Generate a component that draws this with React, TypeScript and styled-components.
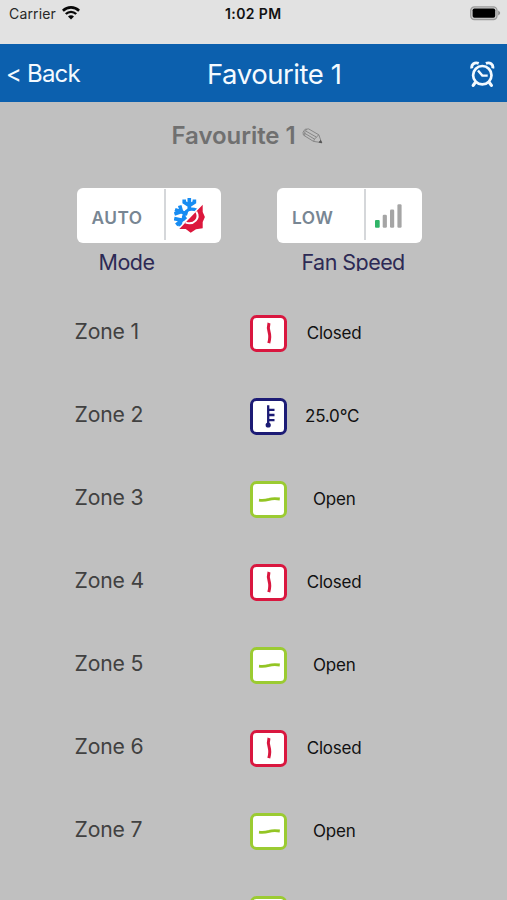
import React from "react";
import styled, { createGlobalStyle } from "styled-components";

const GlobalStyle = createGlobalStyle`
  * { box-sizing: border-box; }
  html, body { margin: 0; padding: 0; overflow: hidden; background: #c0c0c0; }
  body { font-family: Inter, "Liberation Sans", sans-serif; }
  svg { display: block; flex: none; }
`;

const Screen = styled.div`
  width: 507px;
  height: 900px;
  overflow: hidden;
  background: #c0c0c0;
  display: flex;
  flex-direction: column;
`;

const Text = styled.span<{ $w: number; $size: number; $space?: number; $weight?: number; $color?: string }>`
  width: ${(p) => p.$w}px;
  font-size: ${(p) => p.$size}px;
  letter-spacing: ${(p) => p.$space ?? 0}px;
  font-weight: ${(p) => p.$weight ?? 400};
  color: ${(p) => p.$color ?? "#111"};
  white-space: nowrap;
  line-height: 1.2;
`;

const StatusBar = styled.div`
  height: 43.5px;
  flex: none;
  background: #e2e2e2;
  display: grid;
  grid-template-columns: 53px 163px 244.5px 30px;
  align-items: start;
  padding: 6px 0 0 9px;
`;

const NavBar = styled.header`
  height: 58.5px;
  flex: none;
  background: #0c60ae;
  display: grid;
  grid-template-columns: 201px 263px 28px;
  align-items: center;
  padding: 3px 0 0 6px;
`;

const TitleRow = styled.div`
  height: 86px;
  flex: none;
  display: flex;
  align-items: flex-start;
  padding: 20px 0 0 171.5px;
  svg { margin: 6px 0 0 5px; }
`;

const Controls = styled.div`
  display: flex;
  flex: none;
  height: 104.5px;
  gap: 56px;
  padding-left: 76.5px;
`;

const Control = styled.div`
  width: 144.5px;
`;

const ControlButton = styled.button`
  width: 144.5px;
  height: 55px;
  border: 0;
  border-radius: 6px;
  background: #fff;
  display: grid;
  grid-template-columns: 87px 2px 1fr;
  align-items: center;
  padding: 1px 0 3px;
  font-family: inherit;
  text-align: left;
  > span { padding: 7px 0 0 15px; }
`;

const Divider = styled.div`
  height: 51px;
  background: #d5d7da;
`;

const Caption = styled.div<{ $inset: number }>`
  height: 28px;
  overflow: hidden;
  padding: 7px 0 0 ${(p) => p.$inset}px;
  span { display: block; }
`;

const ZoneList = styled.div`
  flex: none;
  margin-top: -1px;
`;

const ZoneRow = styled.div`
  height: 83px;
  display: grid;
  grid-template-columns: 175.5px 37px 93px;
  align-items: center;
  padding-left: 74.5px;
`;

const ZoneName = styled.div`
  padding-bottom: 2px;
`;

const ZoneState = styled.div<{ $left: number }>`
  padding-left: ${(p) => p.$left}px;
`;

type State = "closed" | "temp" | "open";
const tones: Record<State, string> = { closed: "#d9173f", temp: "#1c1b75", open: "#9bcb32" };

const StateBox = styled.div<{ $state: State }>`
  width: 37px;
  height: 37px;
  border: 3px solid ${(p) => tones[p.$state]};
  border-radius: 6.5px;
  background: #fff;
`;

const StateGlyph = ({ state }: { state: State }) => (
  <StateBox $state={state}>
    <svg width="31" height="31" viewBox="0 0 31 31" fill="none" stroke={tones[state]}>
      {state === "closed" && (
        <path d="M16 5C15 8.5 15 11 16.2 14.5C17.3 18 16.8 21.5 15.8 25.2" strokeWidth="3" />
      )}
      {state === "open" && (
        <path d="M6 16.1C10 16.6 12.5 16.3 16 15.4C19.5 14.3 23 14.5 26.8 15" strokeWidth="2.8" stroke="#93c524" />
      )}
      {state === "temp" && (
        <>
          <path d="M15.2 4.2V24M16 8.9H21.5M16 14H21.5M16 19.2H21.5" strokeWidth="2.3" />
          <circle cx="15.2" cy="24" r="2.6" fill={tones.temp} stroke="none" />
        </>
      )}
    </svg>
  </StateBox>
);

const Wifi = () => (
  <svg width="18" height="14" viewBox="0 0 18 14" fill="none" stroke="#080808" strokeWidth="2.6">
    <path d="M.9 4.7C5.6.3 12.4.3 17.1 4.7" />
    <path d="M3.8 8C6.8 5.1 11.2 5.1 14.2 8" strokeWidth="2.4" />
    <path d="M6 10.4C7.8 8.7 10.2 8.7 12 10.4L9 13.6Z" fill="#080808" stroke="none" />
  </svg>
);

const Battery = () => (
  <svg width="31" height="15" viewBox="0 0 31 15">
    <rect x=".7" y=".9" width="26.3" height="12.6" rx="3.7" fill="#d0d0d0" stroke="#9a9a9a" strokeWidth="1.3" />
    <rect x="2.6" y="2.4" width="22.6" height="9.4" rx="1.8" fill="#000" />
    <path d="M28.2 4.6Q32.2 7.1 28.2 9.6Z" fill="#8e8e8e" />
  </svg>
);

const Alarm = () => (
  <svg width="25" height="27" viewBox="0 0 25 27" fill="none" stroke="#f4faff">
    <circle cx="12.3" cy="14.2" r="9.2" strokeWidth="2.7" />
    <path d="M1.9 7.4C.8 3.2 5 .8 8.7 2.4M22.7 7.4C23.8 3.2 19.6.8 15.9 2.4" strokeWidth="2.9" />
    <path d="M5.2 21.6L3.2 24.4M19.4 21.6L21.4 24.4" strokeWidth="3.2" strokeLinecap="round" />
    <path d="M8 9.4L12.3 14.5L17.7 14.6" strokeWidth="2.4" />
  </svg>
);

const Pencil = () => (
  <svg width="21" height="17" viewBox="0 0 21 17" fill="none" stroke="#808080" strokeWidth=".9" strokeLinejoin="round">
    <path d="M3 1.3L6.6.9L16.8 6.8L19.6 14.6L11.5 13.4L1.4 7.1Q-.1 4.2 3 1.3Z" />
    <path d="M2.5 5.2L12.5 11.1L11.5 13.4M4 3.2L14.4 9.1L12.5 11.1M16.8 6.8L14.4 9.1M4.7 1.2Q2 3 2.7 7.8" />
    <path d="M18.5 12.4L19.8 14.8L17.2 14.3Z" fill="#555" stroke="#555" />
  </svg>
);

const AutoMode = () => (
  <svg width="33" height="37" viewBox="0 0 33 37">
    <defs>
      <clipPath id="cold-half">
        <path d="M-2 -2H36L27.3 7.2L3.5 31.8L-2 37Z" />
      </clipPath>
    </defs>
    <g clipPath="url(#cold-half)" fill="none" stroke="#178cf2" strokeWidth="3.6">
      <path d="M15.3 1V13M10.2 2.6V5.2L15.3 8.5L20.4 5.2V2.6" />
      <path d="M1 12.6L13.5 17M5.7 8.4L7.5 14.6L.4 17" />
      <path d="M2.2 27.8L12 19.8M.2 21.6L7 23L6 29.6" />
      <path d="M9.6 23.5Q8.6 15.5 15.3 12.4Q19 11.6 22.8 13.2" strokeWidth="3.2" />
    </g>
    <path d="M28.7 7.8V15L30.9 20L28.7 25V31.2L22 32.3L16.7 35.8L11.7 32H5.3L28.7 7.8Z" fill="#dc173c" />
    <path d="M22.2 14.4C26.3 21.3 20.2 28.4 11.6 25.6" fill="none" stroke="#fff" strokeWidth="2" />
  </svg>
);

const FanBars = () => (
  <svg width="27" height="25" viewBox="0 0 27 25">
    <rect x="0" y="16" width="4.7" height="7.8" rx="1" fill="#30b568" />
    <g fill="#a5a5a5">
      <rect x="7.7" y="10.7" width="4.2" height="13" rx="1.3" />
      <rect x="15" y="5.5" width="4.2" height="18.2" rx="1.3" />
      <rect x="22.4" y=".3" width="4.2" height="23.4" rx="1.3" />
    </g>
  </svg>
);

const ModeIcon = styled.div`
  padding: 1px 0 0 8px;
`;
const FanIcon = styled.div`
  padding: 3px 0 0 8.7px;
`;

const zones: State[] = ["closed", "temp", "open", "closed", "open", "closed", "open", "open"];
const stateText: Record<State, { label: string; left: number; space: number }> = {
  closed: { label: "Closed", left: 19.7, space: -0.2 },
  temp: { label: "25.0°C", left: 18, space: -0.2 },
  open: { label: "Open", left: 26, space: -0.2 },
};

export default function App() {
  return (
    <>
      <GlobalStyle />
      <Screen>
        <StatusBar>
          <Text $w={50} $size={14} $space={0.15} $color="#282828">Carrier</Text>
          <Wifi />
          <Text $w={70} $size={14} $weight={600} $space={0.4}>1:02 PM</Text>
          <Battery />
        </StatusBar>
        <NavBar>
          <Text $w={100} $size={24} $space={-0.8} $color="#f4faff">&lt; Back</Text>
          <Text $w={180} $size={27.5} $space={-0.45} $color="#f4faff">Favourite 1</Text>
          <Alarm />
        </NavBar>
        <TitleRow>
          <Text $w={125} $size={24} $space={-0.05} $weight={600} $color="#707070">Favourite 1</Text>
          <Pencil />
        </TitleRow>
        <Controls>
          <Control>
            <ControlButton>
              <Text $w={87} $size={17.3} $weight={600} $space={0.5} $color="#788693">AUTO</Text>
              <Divider />
              <ModeIcon><AutoMode /></ModeIcon>
            </ControlButton>
            <Caption $inset={22}><Text $w={100} $size={21.5} $space={-0.5} $color="#2d2a55">Mode</Text></Caption>
          </Control>
          <Control>
            <ControlButton>
              <Text $w={87} $size={17.3} $weight={600} $space={0.5} $color="#788693">LOW</Text>
              <Divider />
              <FanIcon><FanBars /></FanIcon>
            </ControlButton>
            <Caption $inset={24.5}><Text $w={118} $size={21.5} $space={-0.55} $color="#2d2a55">Fan Speed</Text></Caption>
          </Control>
        </Controls>
        <ZoneList>
          {zones.map((state, i) => (
            <ZoneRow key={i}>
              <ZoneName><Text $w={100} $size={21.2} $space={-0.15} $color="#414141">{i < 7 ? `Zone ${i + 1}` : ""}</Text></ZoneName>
              <StateGlyph state={state} />
              <ZoneState $left={stateText[state].left}>
                <Text $w={60} $size={17} $space={stateText[state].space}>{i < 7 ? stateText[state].label : ""}</Text>
              </ZoneState>
            </ZoneRow>
          ))}
        </ZoneList>
      </Screen>
    </>
  );
}
